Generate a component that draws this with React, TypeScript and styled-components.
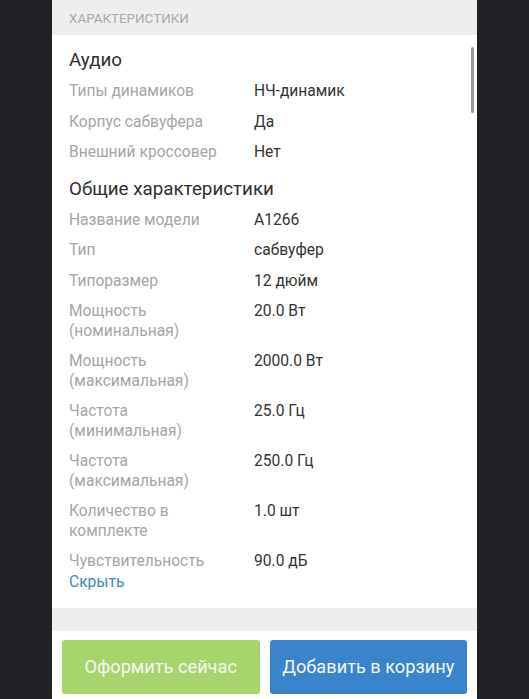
import React from "react";
import styled, { createGlobalStyle } from "styled-components";

const Global = createGlobalStyle`
  html, body { margin: 0; padding: 0; background: #202125; }
  body { font-family: Roboto, "Noto Sans", Arial, sans-serif; -webkit-font-smoothing: antialiased; }
  * { box-sizing: border-box; }
`;

const Page = styled.div`
  width: 425px;
  height: 699px;
  margin: 0 auto;
  display: flex;
  flex-direction: column;
  overflow: hidden;
  background: #ffffff;
`;

const SectionHeader = styled.div`
  height: 35px;
  flex: none;
  background: #eeeeee;
  padding: 11px 17px 0;
  font-size: 13.4px;
  line-height: 16px;
  color: #a9a9a9;
  text-transform: uppercase;
`;

const Content = styled.div`
  position: relative;
  background: #ffffff;
  padding: 14px 17px 16px;
`;

const Scrollbar = styled.div`
  position: absolute;
  right: 3px;
  top: 12px;
  width: 3px;
  height: 66px;
  border-radius: 2px;
  background: #9a9a9a;
`;

const GroupTitle = styled.div<{ $first?: boolean }>`
  font-size: 18.8px;
  line-height: 22px;
  color: #2f2f2f;
  margin-top: ${(p) => (p.$first ? "0" : "15px")};
`;

const Row = styled.div`
  display: flex;
  padding-top: 11px;
  font-size: 15.6px;
  line-height: 19.5px;
`;

const Label = styled.div`
  flex: none;
  width: 185px;
  padding-right: 17px;
  color: #a6a6a6;
`;

const Value = styled.div`
  flex: 1;
  color: #333333;
`;

const HideLink = styled.a`
  display: block;
  font-size: 15.6px;
  line-height: 20px;
  color: #3d87bd;
  text-decoration: none;
`;

const Divider = styled.div`
  height: 23px;
  flex: none;
  background: #eeeeee;
`;

const Footer = styled.div`
  display: flex;
  gap: 10px;
  padding: 9px 10px;
  background: #ffffff;
`;

const ActionButton = styled.button<{ $variant: "green" | "blue" }>`
  flex: 1;
  height: 54px;
  border: none;
  border-radius: 3px;
  background: ${(p) => (p.$variant === "green" ? "#a7d46c" : "#3a84cb")};
  color: #f4f8f4;
  font-family: inherit;
  font-size: 18.2px;
  padding: 0;
`;

type Spec = { label: string; value: string };

const audio: Spec[] = [
  { label: "Типы динамиков", value: "НЧ-динамик" },
  { label: "Корпус сабвуфера", value: "Да" },
  { label: "Внешний кроссовер", value: "Нет" },
];

const general: Spec[] = [
  { label: "Название модели", value: "A1266" },
  { label: "Тип", value: "сабвуфер" },
  { label: "Типоразмер", value: "12 дюйм" },
  { label: "Мощность (номинальная)", value: "20.0 Вт" },
  { label: "Мощность (максимальная)", value: "2000.0 Вт" },
  { label: "Частота (минимальная)", value: "25.0 Гц" },
  { label: "Частота (максимальная)", value: "250.0 Гц" },
  { label: "Количество в комплекте", value: "1.0 шт" },
  { label: "Чувствительность", value: "90.0 дБ" },
];

const SpecRows = ({ items }: { items: Spec[] }) => (
  <>
    {items.map((s) => (
      <Row key={s.label}>
        <Label>{s.label}</Label>
        <Value>{s.value}</Value>
      </Row>
    ))}
  </>
);

export default function App() {
  return (
    <>
      <Global />
      <Page>
        <SectionHeader>Характеристики</SectionHeader>
        <Content>
          <Scrollbar />
          <GroupTitle $first>Аудио</GroupTitle>
          <SpecRows items={audio} />
          <GroupTitle>Общие характеристики</GroupTitle>
          <SpecRows items={general} />
          <HideLink href="#">Скрыть</HideLink>
        </Content>
        <Divider />
        <Footer>
          <ActionButton $variant="green">Оформить сейчас</ActionButton>
          <ActionButton $variant="blue">Добавить в корзину</ActionButton>
        </Footer>
      </Page>
    </>
  );
}
